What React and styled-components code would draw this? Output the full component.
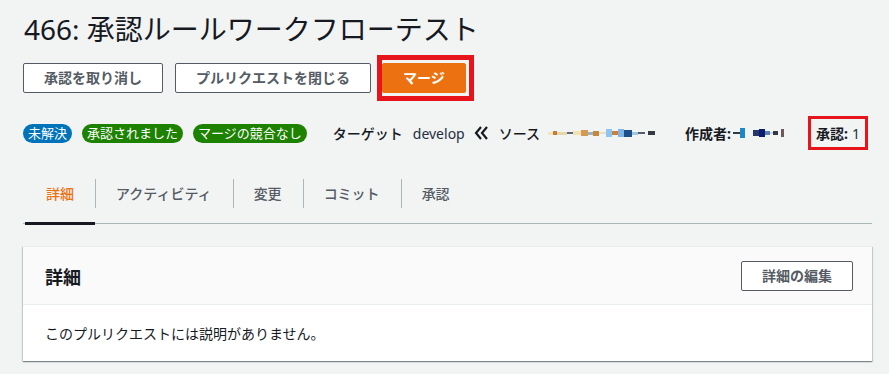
import React from 'react';
import styled, { createGlobalStyle } from 'styled-components';

const GlobalStyle = createGlobalStyle`
  html, body {
    margin: 0;
    padding: 0;
    background: #f2f3f3;
  }
  body {
    font-family: "Noto Sans", "Noto Sans CJK JP", sans-serif;
    color: #16191f;
  }
`;

const Page = styled.div`
  box-sizing: border-box;
  width: 889px;
  min-height: 374px;
  padding: 0 17px 0 23px;
  background: #f2f3f3;
`;

const Title = styled.h1`
  margin: 0;
  padding-top: 9px;
  padding-left: 1px;
  font-size: 28px;
  font-weight: 400;
  line-height: 40px;
  color: #16191f;
`;

const ButtonRow = styled.div`
  display: flex;
  align-items: center;
  gap: 12px;
  margin-top: 14px;
  height: 30px;
`;

const Button = styled.button`
  box-sizing: border-box;
  height: 30px;
  padding: 0 20px;
  border-radius: 2px;
  border: 1px solid ${(p) => (p.primary ? '#ec7211' : '#545b64')};
  background: ${(p) => (p.primary ? '#ec7211' : '#ffffff')};
  color: ${(p) => (p.primary ? '#ffffff' : '#545b64')};
  font-family: "Noto Sans", "Noto Sans CJK JP", sans-serif;
  font-size: 14px;
  font-weight: 700;
  line-height: 28px;
  white-space: nowrap;
  cursor: pointer;
`;

const Highlight = styled.div`
  display: flex;
  align-items: center;
  flex: none;
  box-sizing: border-box;
  border: ${(p) => p.thick}px solid #e8141b;
  padding: ${(p) => p.pad};
  margin-left: ${(p) => p.shift || 0}px;
`;

const MetaRow = styled.div`
  display: flex;
  align-items: center;
  margin-top: 25px;
  height: 30px;
  font-size: 14px;
`;

const Badges = styled.div`
  display: flex;
  gap: 10px;
  margin-right: 26px;
`;

const Badge = styled.span`
  display: inline-block;
  height: 19px;
  padding: 0 5px;
  border-radius: 10px;
  background: ${(p) => p.color};
  color: #ffffff;
  font-size: 13px;
  line-height: 19px;
  white-space: nowrap;
`;

const Label = styled.span`
  font-weight: ${(p) => (p.bold ? 700 : 500)};
  color: #16191f;
  white-space: nowrap;
`;

const Value = styled.span`
  margin-left: ${(p) => p.gap}px;
  color: #232f3e;
  white-space: nowrap;
`;

const Arrow = styled.svg`
  margin: 0 11px 0 9px;
  flex: none;
`;

const Redacted = styled.span`
  display: inline-flex;
  align-items: center;
  height: 12px;
  margin-left: ${(p) => p.gap}px;
  margin-right: ${(p) => p.after}px;
`;

const Pixel = styled.span`
  display: inline-block;
  width: ${(p) => p.w}px;
  height: ${(p) => p.h}px;
  background: ${(p) => p.c};
`;

const Tabs = styled.div`
  display: flex;
  margin-top: 15px;
  height: 60px;
  border-bottom: 1px solid #aab7b8;
`;

const Tab = styled.div`
  position: relative;
  display: flex;
  align-items: center;
  padding: 0 21px;
  font-size: 14px;
  font-weight: 500;
  color: ${(p) => (p.active ? '#ec7211' : '#545b64')};
  white-space: nowrap;

  &:first-child {
    margin-left: 2px;
  }

  &:not(:first-child)::before {
    content: '';
    position: absolute;
    left: 0;
    top: 16px;
    height: 29px;
    border-left: 1px solid #aab7b8;
  }

  ${(p) =>
    p.active &&
    `
    &::after {
      content: '';
      position: absolute;
      left: 0;
      right: 0;
      bottom: -2px;
      height: 3px;
      background: #16191f;
    }
  `}
`;

const Panel = styled.section`
  margin-top: 22px;
  background: #ffffff;
  border-top: 1px solid #eaeded;
  box-shadow: 0 1px 1px 0 rgba(0, 28, 36, 0.3), 1px 1px 1px 0 rgba(0, 28, 36, 0.15),
    -1px 1px 1px 0 rgba(0, 28, 36, 0.15);
`;

const PanelHeader = styled.header`
  display: flex;
  align-items: center;
  justify-content: space-between;
  height: 57px;
  padding: 0 19px 0 22px;
  background: #fafafa;
  border-bottom: 1px solid #eaeded;
`;

const PanelTitle = styled.h2`
  margin: 0;
  font-size: 18px;
  font-weight: 700;
  color: #16191f;
`;

const PanelBody = styled.div`
  height: 56px;
  display: flex;
  align-items: center;
  padding: 0 22px;
  font-size: 14px;
  color: #16191f;
`;

const redactSource = [
  ['#f3e6b8', 5, 3], ['#c97a3a', 4, 4], ['#e7d8a8', 10, 3], ['#5a6a80', 6, 2], ['#f1e3b0', 8, 4],
  ['#d59a52', 7, 6], ['#9bb2cc', 5, 3], ['#c4883d', 6, 5], ['#e5dfc8', 7, 2], ['#8ec6ef', 6, 8],
  ['#c7813c', 6, 4], ['#7fb6e6', 6, 8], ['#1d4f8a', 8, 7], ['#9fc4e6', 6, 3], ['#5a5a6a', 7, 2],
  ['#f2f3f3', 3, 2], ['#333a44', 7, 4],
];

const redactAuthor = [
  ['#333a44', 7, 2], ['#1b89c9', 5, 10], ['#f2f3f3', 8, 2], ['#27366e', 6, 6], ['#0b1d6e', 6, 8],
  ['#5c7fb2', 5, 4], ['#cfd6e0', 3, 2], ['#333a44', 5, 4], ['#f2f3f3', 3, 2], ['#6c5a5a', 3, 8],
];

const RedactedText = ({ cells, gap, after }) => (
  <Redacted gap={gap} after={after}>
    {cells.map(([c, w, h], i) => (
      <Pixel key={i} c={c} w={w} h={h} />
    ))}
  </Redacted>
);

const DoubleChevron = () => (
  <Arrow width="14" height="16" viewBox="0 0 14 16">
    <polyline points="7,2 2,8 7,14" fill="none" stroke="#16191f" strokeWidth="2.2" />
    <polyline points="13,2 8,8 13,14" fill="none" stroke="#16191f" strokeWidth="2.2" />
  </Arrow>
);

const tabs = ['詳細', 'アクティビティ', '変更', 'コミット', '承認'];

const App = () => (
  <Page>
    <GlobalStyle />
    <Title>466: 承認ルールワークフローテスト</Title>

    <ButtonRow>
      <Button>承認を取り消し</Button>
      <Button>プルリクエストを閉じる</Button>
      <Highlight thick={5} pad="3px 3px 3px 0" shift={-6}>
        <Button primary>マージ</Button>
      </Highlight>
    </ButtonRow>

    <MetaRow>
      <Badges>
        <Badge color="#0073bb">未解決</Badge>
        <Badge color="#1d8102">承認されました</Badge>
        <Badge color="#1d8102">マージの競合なし</Badge>
      </Badges>
      <Label>ターゲット</Label>
      <Value gap={10}>develop</Value>
      <DoubleChevron />
      <Label>ソース</Label>
      <RedactedText cells={redactSource} gap={8} after={30} />
      <Label bold>作成者:</Label>
      <RedactedText cells={redactAuthor} gap={2} after={24} />
      <Highlight thick={3} pad="4px 5px">
        <Label bold>承認:</Label>
        <Value gap={4}>1</Value>
      </Highlight>
    </MetaRow>

    <Tabs>
      {tabs.map((t, i) => (
        <Tab key={t} active={i === 0}>
          {t}
        </Tab>
      ))}
    </Tabs>

    <Panel>
      <PanelHeader>
        <PanelTitle>詳細</PanelTitle>
        <Button>詳細の編集</Button>
      </PanelHeader>
      <PanelBody>このプルリクエストには説明がありません。</PanelBody>
    </Panel>
  </Page>
);

export default App;
